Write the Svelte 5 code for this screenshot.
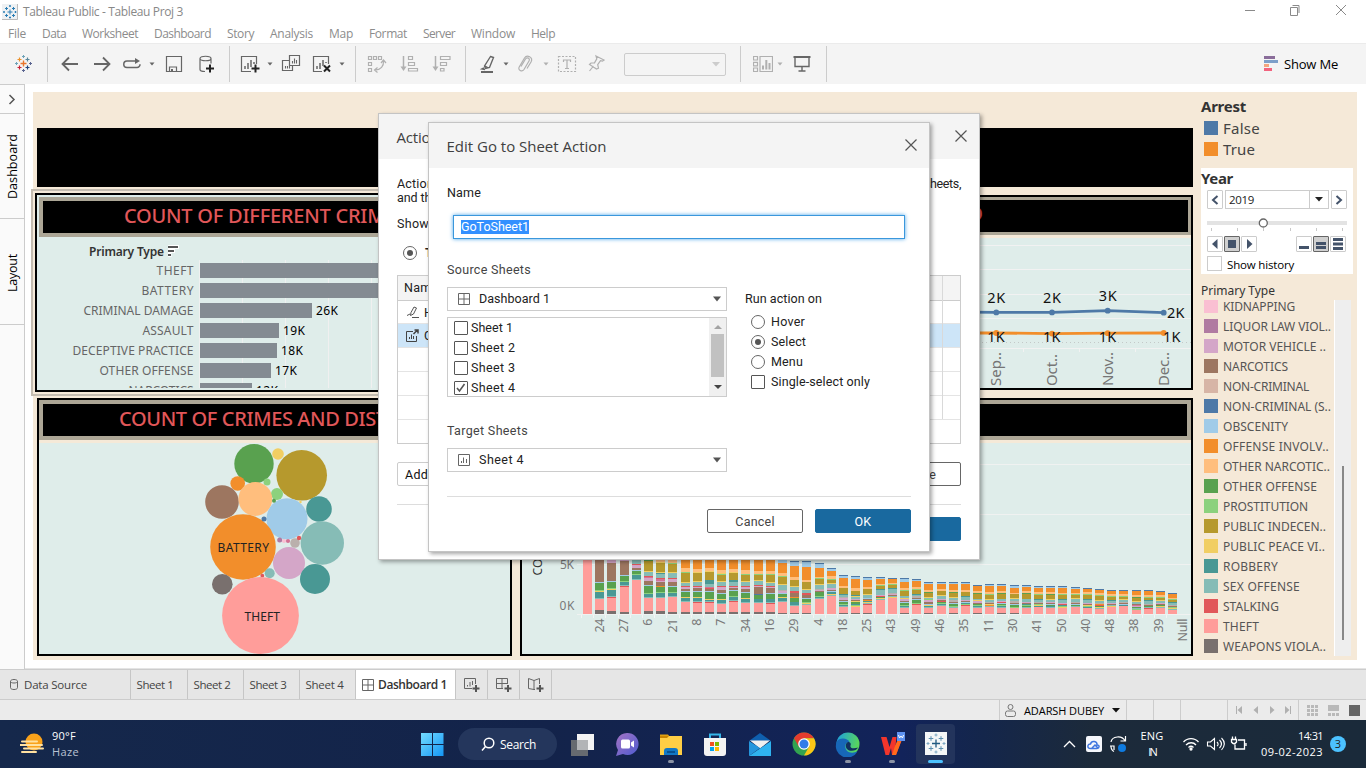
<script>
  // Tracks a label out (or in) so that it fills its design width.
  function fit(node, width) {
    const box = node.getBoundingClientRect();
    const natural = Math.max(box.width, box.height);
    node.style.letterSpacing = (width - natural) / node.textContent.length + 'px';
  }

  const menus = [
    ['File', 18], ['Data', 24], ['Worksheet', 56], ['Dashboard', 57], ['Story', 27], ['Analysis', 43],
    ['Map', 24], ['Format', 38], ['Server', 32], ['Window', 44], ['Help', 24]
  ];

  // [icon, gap before it]
  const toolGroups = [
    { w: 48, items: [['logo', 14]] },
    { w: 182, items: [['back', 12], ['forward', 12], ['loop', 10], ['caret', 5], ['save', 7], ['source', 12]] },
    { w: 126, items: [['addsheet', 10], ['caret', 5], ['duplicate', 6], ['clear', 11], ['caret', 5]] },
    { w: 110, faint: true, items: [['swap', 11], ['asc', 13], ['desc', 12]] }
  ];

  const rows = [
    ['THEFT', 37, 300, ''], ['BATTERY', 52, 260, ''], ['CRIMINAL DAMAGE', 110, 112, '26K'], ['ASSAULT', 51, 79, '19K'],
    ['DECEPTIVE PRACTICE', 121, 77, '18K'], ['OTHER OFFENSE', 94, 71, '17K'], ['NARCOTICS', 65, 52, '12K']
  ];

  const bubbles = [
    [254, 463.7, 19.7, '#59a14f'], [278, 454, 5.8, '#f1ce63'], [301.7, 475.3, 25.3, '#b6992d'],
    [237.7, 483.5, 7.3, '#f28e2b'], [267, 482, 3.5, '#8cd17d'], [277, 494, 6, '#8cd17d'],
    [222, 502, 16.8, '#9d7660'], [255.3, 499, 16.9, '#ffbe7d'], [287, 518.8, 20.5, '#a0cbe8'],
    [319, 509, 12.8, '#499894'], [322.3, 543, 21.7, '#86bcb6'], [243, 547, 32.8, '#f28e2b'],
    [264, 519, 2.5, '#4e79a7'], [274, 500.7, 2, '#59a14f'], [289, 563, 16, '#d4a6c8'],
    [315, 579, 15, '#499894'], [269.7, 573.3, 5, '#86bcb6'], [262.3, 575.7, 1.9, '#e15759'],
    [222.3, 584.3, 10.3, '#79706e'], [260.5, 615.5, 38.4, '#ff9d9a'], [279.7, 540, 2.5, '#b07aa1'],
    [284, 541, 2, '#fabfd2'], [288, 541, 2.1, '#d37295'], [295, 543, 4.8, '#bab0ac'], [299, 538, 2.2, '#e15759'],
    [300.5, 502, 1.2, '#f1ce63']
  ];

  const hue = {
    w: '#79706e', t: '#ff9d9a', s: '#e15759', x: '#86bcb6', r: '#499894', y: '#f1ce63', o: '#b6992d', p: '#8cd17d',
    g: '#59a14f', n: '#ffbe7d', f: '#f28e2b', b: '#a0cbe8', B: '#4e79a7', m: '#d4a6c8', c: '#9d7660', l: '#d37295', k: '#bab0ac'
  };
  // Each bar bottom-up: colour key followed by its height.
  const stacks = [
    't60', 'w4 t11 x1 r6 y1 p1 g7 b1 c28', 'w3 t13 s1 x1 r6 y1 p1 g6 b1 c18 m9', 'w2 t25 s1 x1 r3 p1 g5 b1 c14 m7',
    't34 x1 r4 p1 g3 b1 c2 m3 s1 x10', 'w3 t13 x1 r3 p1 g7 b1 c4 m3 l1 s1 x4 y1 o10 g1 n7',
    'w3 t13 x1 r4 p1 g5 f1 c4 m1 l2 s1 x4 r1 y1 o9 y1 n9', 'w2 t15 x1 r3 p1 g5 b1 c4 m3 s1 x5 y1 o8 p1 n9',
    'w2 t10 x1 r3 y1 g5 b1 c2 m2 s1 x3 y1 o9 p1 n4 f15', 'w2 t9 s1 x1 r3 y1 g5 b1 c3 m1 s1 x4 y1 o8 y1 n3 f15',
    'w2 t9 s1 x1 r1 y1 g7 b1 c2 s1 l1 x3 r4 o8 y1 n3 f15', 'w2 t8 x1 r3 y1 g5 b1 c3 m3 s1 x4 y1 o6 p1 y1 n3 f15',
    'w2 t10 s1 x1 r3 p1 g5 b1 c2 m1 s1 x4 r2 o7 y1 n3 f15', 'w2 t9 x1 r3 y1 g5 b1 c3 m2 s1 x4 y1 o6 p1 n4 f15',
    'w2 t9 x1 r3 g4 B1 c7 m1 s1 x4 y1 o5 p1 n3 f15', 'w2 t8 s1 x1 r3 g5 b1 c5 m1 s1 x3 y1 o7 p1 n3 f15',
    'w1 t11 x1 r3 y1 g3 b1 m2 k1 x5 y1 o7 p1 n3 f10 b6', 'w1 t7 x1 r3 g4 f1 c4 s2 x4 y1 o6 n3 f11 b4 B1',
    'w1 t8 x1 y1 p1 g3 b1 c3 s2 x3 y1 o7 n2 f13 b5 B1', 't15 x1 r1 p1 g4 c1 m1 k1 x4 y1 o5 p1 n1 f9 b4 B1',
    't18 x1 y1 r2 b1 c1 m2 x4 y1 o3 p1 n3 f5 b2 B1', 'w1 t6 x1 r1 p1 g2 b1 c1 m2 k1 x2 r1 o6 n2 f8 b2 B1',
    'w1 t6 y1 p1 r1 g2 y1 c1 m1 x2 y1 r1 o4 n3 f9 b2 B1', 'w1 t8 s1 x1 y1 r1 f1 c1 b1 x3 y1 o5 n2 f7 b2 B1',
    't14 x1 y1 g1 s1 m1 x5 r1 o3 p1 n1 f5 b1 B1', 't16 y1 x1 c1 m1 k1 x4 r1 o3 p1 n1 f4 B1',
    'w1 t5 x1 r1 p1 g2 b1 c1 m2 y1 x2 o5 p1 n2 f6 b3 B1', 't9 s1 p1 g3 b1 c1 k2 x1 r1 o4 p1 n2 f6 b1 B1',
    'w1 t5 x1 r1 y1 b1 c2 m2 p1 x1 y1 o4 g1 n2 f6 b1 B1', 't8 x1 r1 p1 g1 s1 c1 m1 x3 y1 o4 n2 f5 b1 B1',
    'w1 t5 x1 p1 g2 b1 c1 k2 x2 y1 o4 g1 n2 f6 b1 B1', 't8 s1 p1 r1 b1 c1 m1 x3 r1 o4 n2 f6 b1 B1',
    'w1 t5 x1 r1 p1 g1 c1 m2 y1 x1 o5 g1 n2 f5 B1', 't7 x1 f1 y1 c1 k1 x2 y1 o4 p1 n2 f6 b1 B1',
    'w1 t5 x1 r1 p1 g1 b1 s1 m1 x2 o5 g1 n2 f5 b1 B1', 'w1 t5 p1 g2 b1 c1 k2 x2 y1 o4 n1 f5 b2 B1',
    't6 x1 g1 p1 r1 c1 m1 x3 o5 g1 n2 f4 b1 B1', 't7 r1 y1 p1 c1 k1 x2 r1 o4 p1 n2 f4 b1 B1',
    't6 x1 r1 g1 b1 c1 m1 x2 y1 o4 g1 n2 f4 b1 B1', 't6 y1 p1 r1 s1 m1 x3 r1 o4 p1 n1 f5 b1 B1',
    't7 x1 g1 b1 c1 k1 x3 y1 o3 p1 n1 f4 b1 B1', 't6 r1 p1 y1 c1 m1 x3 r1 o4 p1 n2 f3 B1',
    't5 x1 y1 g1 s1 f1 k1 x2 y1 o4 p1 n2 f3 B1', 't7 y1 x1 c1 m1 x2 r1 o3 p1 n2 f3 B1',
    't8 r1 b1 c1 k1 x2 y1 o2 p1 n2 f3 B1', 't4 p1 x1 g1 m1 l1 c1 x2 y1 o3 g1 n2 f4 B1',
    't5 s1 x1 g1 c1 k1 x3 r1 o2 p1 n2 f4 B1', 't6 x1 y1 g1 c1 m1 x2 y1 o2 p1 n2 f3 B1',
    't4 x1 y1 p1 c1 k1 x2 r1 o2 p1 n1 f4 B1'
  ].map((text, i) => {
    let y = 614;
    return text.split(' ').map((part) => {
      const h = +part.slice(1);
      y -= h;
      return { x: Math.round(583 + i * 12.19), y, h, fill: hue[part[0]] };
    });
  });
  const wards = ['24', '27', '6', '21', '8', '7', '34', '16', '29', '4', '18', '25', '43', '49', '46', '35', '11', '30', '41', '50', '40', '48', '38', '39', 'Null'];

  const months = [['Sep..', 996.3, 312.4, 333, '2K'], ['Oct..', 1052, 312.4, 333.6, '2K'], ['Nov..', 1107.7, 310.7, 333.2, '3K'], ['Dec..', 1163.7, 312.7, 333, '']];

  const types = [
    ['KIDNAPPING', 72, '#fabfd2'], ['LIQUOR LAW VIOL..', 108, '#b07aa1'], ['MOTOR VEHICLE ..', 103, '#d4a6c8'],
    ['NARCOTICS', 65, '#9d7660'], ['NON-CRIMINAL', 86, '#d7b5a6'], ['NON-CRIMINAL (S..', 108, '#4e79a7'],
    ['OBSCENITY', 65, '#a0cbe8'], ['OFFENSE INVOLV..', 106, '#f28e2b'], ['OTHER NARCOTIC..', 107, '#ffbe7d'],
    ['OTHER OFFENSE', 94, '#59a14f'], ['PROSTITUTION', 85, '#8cd17d'], ['PUBLIC INDECEN..', 103, '#b6992d'],
    ['PUBLIC PEACE VI..', 102, '#f1ce63'], ['ROBBERY', 55, '#499894'], ['SEX OFFENSE', 77, '#86bcb6'],
    ['STALKING', 56, '#e15759'], ['THEFT', 36, '#ff9d9a'], ['WEAPONS VIOLA..', 103, '#79706e']
  ];

  const tabs = [['Sheet 1', 57, 37], ['Sheet 2', 56, 37], ['Sheet 3', 56, 37], ['Sheet 4', 56, 38]];
  const taskIcons = ['start', 'search', 'tasks', 'chat', 'files', 'store', 'mail', 'chrome', 'edge', 'wps', 'tableau'];
  const plus = (x, y, r) => `M${x - r} ${y}h${2 * r}M${x} ${y - r}v${2 * r}`;
  const tickX = (i) => Math.round(581 + i * 12.19) + 0.5;
</script>

{#snippet icon(name)}
  {#if name === 'caret'}
    <svg class="ic" width="10" height="20"><path d="M2.5 8.5h5L5 11.5z" fill="currentColor" /></svg>
  {:else}
    <svg class="ic" width="20" height="20" viewBox="0 0 20 20" fill="none" stroke="currentColor" stroke-width="1.2">
      {#if name === 'logo'}
        <path d={plus(9.5, 9.5, 3)} stroke="#e8762d" stroke-width="1.4" />
        <path d={plus(5.5, 5.5, 2)} stroke="#eb912b" /><path d={plus(13.5, 5.5, 2)} stroke="#59879b" />
        <path d={plus(5.5, 13.5, 2)} stroke="#c72035" /><path d={plus(13.5, 13.5, 2)} stroke="#1f457e" />
        <path d={plus(9.5, 2.5, 1.5) + plus(2.5, 9.5, 1.5)} stroke="#6fa3b8" stroke-width="1" />
        <path d={plus(9.5, 16.5, 1.5) + plus(16.5, 9.5, 1.5)} stroke="#5b6591" stroke-width="1" />
      {:else if name === 'back'}
        <path d="M18 10H3M9 3.5 2.5 10 9 16.5" stroke-width="1.8" />
      {:else if name === 'forward'}
        <path d="M2 10h15M11 3.5 17.500 10 11 16.500" stroke-width="1.8" />
      {:else if name === 'loop'}
        <path d="M14 7H5a3 3 0 0 0 0 6.500h10a3 3 0 0 0 3-3.200" stroke-width="1.500" /><path d="M13 4l5 3-5 3z" fill="currentColor" stroke="none" />
      {:else if name === 'save'}
        <path d="M2.500 2.500h15v15h-15zM5.500 17.500v-4.500h7v4.500" /><path d="M7 15h2v2.500H7z" fill="currentColor" stroke="none" />
      {:else if name === 'source'}
        <path d="M9 17.500c-3 0-5-.8-5-2V4.500c0-3 11-3 11 0v5M4 4.500c0 3 11 3 11 0" /><path d={plus(14, 14.500, 4)} stroke="#222" stroke-width="2" />
      {:else if name === 'addsheet'}
        <path d="M11 17.500H1.500v-15h15V10" /><path d="M5 15v-3M8 15V9M11 13V6M14 10V8" stroke-width="1.500" /><path d={plus(15.500, 14.500, 4)} stroke="#222" stroke-width="2" />
      {:else if name === 'duplicate'}
        <path d="M8.500 1.500h10v10h-10zM8 6.500H1.500v10h10V12" /><path d="M11.500 9.500V7M13.500 9.500V4.500M15.500 9.500V6M4.500 14.500V12M6.500 14.500V12M8.500 14.500V12" stroke-width="1.100" />
      {:else if name === 'clear'}
        <path d="M10 17.500H1.500v-15h15V10" /><path d="M5 15v-3M8 15V9M11 12V6M14 9V8" stroke-width="1.500" /><path d="M12 11.500l6 6M18 11.500l-6 6" stroke="#222" stroke-width="2" />
      {:else if name === 'swap'}
        <path d="M1.500 2.500h3v3h-3zM6.500 2.500h3v3h-3zM11.500 2.500h3v3h-3zM1.500 8.500h3v3h-3zM1.500 14.500h3v3h-3z" /><path d="M16.500 7c.5 5-3 9-8 9M14 9l2.500-3 2.500 3M10.500 13.500 7.500 16l3 2.500" />
      {:else if name === 'asc'}
        <path d="M3.500 2v13" stroke-width="1.500" /><path d="M0.500 12.500h6L3.500 17z" fill="currentColor" stroke="none" /><path d="M8.500 2.500h4v3h-4zM8.500 8.500h6v3h-6zM8.500 14.500h9v2.500h-9z" />
      {:else if name === 'desc'}
        <path d="M3.500 2v13" stroke-width="1.500" /><path d="M0.500 12.500h6L3.500 17z" fill="currentColor" stroke="none" /><path d="M8.500 2.500h9.500v3H8.500zM8.500 8.500h6v3h-6zM8.500 14.500h3.500v2.500H8.500z" />
      {:else if name === 'pen'}
        <path d="M11.500 2.500l3 1-4 10-4 1-1-2.500zM6 12l3 1.800M5 14l-2 1 3 .5" stroke-width="1.400" /><path d="M2 18h12" stroke-width="2" />
      {:else if name === 'clip'}
        <path d="M5 12.500 9.500 5c1.500-2.500 5-.5 3.500 2l-5 8.500c-2 3-6.500.5-4.800-2.500L8.500 4c2.500-4 9-.5 6.500 4l-4 6.500" />
      {:else if name === 'text'}
        <path d="M1.500 2.500h17v15h-17z" stroke-dasharray="2 1.500" /><path d="M6.500 8V6h7v2M10 6v8.500M8 14.500h4" />
      {:else if name === 'pin'}
        <path d="M9 2l8 4-1.500 1-2-.3-2.800 4 .8 3.500-2 .8-7-4.500 1.500-1.500 3.500-.2 2.300-4zM6.500 12l-4 5" />
      {:else if name === 'cards'}
        <path d="M.5 2.500h4v3.500h-4zM.5 8.300h4v3.500h-4zM.5 14h4v3.500h-4zM7 2.500h12.500v15H7z" /><path d="M10 15.500v-4M13.300 15.500V6M16.500 15.500V9" stroke-width="2" />
      {:else if name === 'present'}
        <path d="M1.500 3h17" stroke-width="2" /><path d="M3 4v8.500h14V4M10 12.500V17M6.500 17h7" stroke-width="1.400" />
      {/if}
    </svg>
  {/if}
{/snippet}

{#snippet grid4()}
  <svg width="12" height="12" fill="none" stroke="#666"><path d="M.5.5h11v11H.5zM6 .5v11M.5 6h11" /></svg>
{/snippet}
{#snippet down()}
  <svg width="8" height="6"><path d="M0 .5h8L4 5.500z" fill="#555" /></svg>
{/snippet}

<div class="screen">
  <header class="titlebar">
    <svg width="16" height="16" class="applogo"><rect width="16" height="16" fill="#eef1f3" /><path d="M0 15.500h15.500V0" stroke="#bbb" fill="none" /><path d={plus(8, 8, 2.5) + plus(4.500, 4.500, 1.500) + plus(11.500, 4.500, 1.500) + plus(4.500, 11.500, 1.500) + plus(11.500, 11.500, 1.500) + plus(8, 2, 1) + plus(8, 13.500, 1) + plus(2, 8, 1) + plus(13.500, 8, 1)} stroke="#2b7eb5" /></svg>
    <span use:fit={160}>Tableau Public - Tableau Proj 3</span>
    <svg class="winbtns" width="104" height="12" fill="none" stroke="#8a8a8a"><path d="M1 6.500h10" /><path d="M46.500 3.500h7v8h-7zM48.500 1.500h6.500v7.500" /><path d="M92 1l10 10M102 1 92 11" /></svg>
  </header>

  <nav class="menubar">
    {#each menus as [label, w]}
      <div class="menu" style:width="{w}px"><span use:fit={w}>{label}</span></div>
    {/each}
  </nav>

  <div class="toolbar">
    {#each toolGroups as g}
      <div class="tools" class:faint={g.faint} style:width="{g.w}px">
        {#each g.items as [name, gap]}
          <span class="tool" style:margin-left="{gap}px">{@render icon(name)}</span>
        {/each}
      </div>
    {/each}
    <div class="tools marks">
      <span class="tool">{@render icon('pen')}</span>
      <span class="tool c1">{@render icon('caret')}</span>
      <span class="faint fgrp">
        {@render icon('clip')}{@render icon('caret')}{@render icon('text')}{@render icon('pin')}
      </span>
      <div class="combo"><svg width="8" height="5"><path d="M0 0h8L4 4.500z" fill="#ccc" /></svg></div>
    </div>
    <div class="tools view">
      <span class="faint vgrp">{@render icon('cards')}{@render icon('caret')}</span>
      {@render icon('present')}
    </div>
    <div class="showme">
      <svg width="14" height="16"><path d="M0 0h11v3H0z" fill="#8a6d9a" /><path d="M0 4h14v3H0z" fill="#7d9fc9" /><path d="M0 8h5v3H0z" fill="#f2a57f" /><path d="M0 12h8v3H0z" fill="#f2637e" /></svg>
      <span use:fit={54}>Show Me</span>
    </div>
  </div>

  <main>
    <aside class="rail">
      <div class="chev"><svg width="8" height="11" fill="none" stroke="#555" stroke-width="1.500"><path d="M1.500 1l4.500 4.500-4.500 4.500" /></svg></div>
      <div class="side"><span use:fit={65}>Dashboard</span></div>
      <div class="side lay"><span use:fit={38}>Layout</span></div>
    </aside>

    <section class="canvas">
      <div class="dash">
        <div class="board">
          <div class="banner"></div>
          <div class="row one">
            <div class="chosen">
              <article class="panel">
                <h2 class="t1"><span use:fit={283}>COUNT OF DIFFERENT CRIMES</span></h2>
                <svg class="bars" viewBox="37 237 473 153" width="473" height="153">
                  <text x="89" y="255.500" class="head" textLength="75">Primary Type</text>
                  <path d="M168 247h11M168 251h7M168 255h3.500" stroke="#fff" stroke-width="4" />
                  <path d="M168 247h10M168 251h6M168 255h3" stroke="#555" stroke-width="2" />
                  <path d="M199.500 260v128M242.500 260v128M285.500 260v128M328.500 260v128M371.500 260v128" stroke="#f0f0f0" />
                  <svg x="37" y="237" width="473" height="151" viewBox="37 237 473 151">
                    {#each rows as [name, w, len, label], i}
                      <text x={193.500 - w} y={275 + i * 20} class="cat" textLength={w}>{name}</text>
                      <rect x="200" y={263 + i * 20} width={len} height="15" fill="#848b92" />
                      {#if label}<text x={204 + len} y={275 + i * 20} class="val" textLength="22">{label}</text>{/if}
                    {/each}
                  </svg>
                </svg>
              </article>
            </div>
            <article class="panel lines">
              <h2 class="t3">D</h2>
              <svg class="fill" viewBox="522 238 669 150" width="669" height="150">
                <path d="M522 245.500h669M522 269.500h669M522 294.500h669M522 318.500h669M522 348.500h669M1023.500 348v4M1079.500 348v4M1135.500 348v4" stroke="#f2f2f2" />
                <path d="M522 342.500h669" stroke="#c4c9c8" stroke-dasharray="1 3" />
                <path d="M900 311.500L996.300 312.400 1052 312.400 1107.700 310.700 1163.700 312.700" fill="none" stroke="#4e79a7" stroke-width="2.800" />
                <path d="M900 333L996.300 333 1052 333.600 1107.700 333.200 1163.700 333" fill="none" stroke="#f28e2b" stroke-width="2.800" />
                {#each months as [name, x, a, b, label]}
                  <circle cx={x} cy={a} r="2.900" fill="#4e79a7" /><circle cx={x} cy={b} r="2.900" fill="#f28e2b" />
                  {#if label}<text x={x - 9} y={a - 9.800} class="pt" textLength="18">{label}</text>{/if}
                  <text class="pt" textLength="17.500" x={label ? x - 9 : 1163} y={341.500}>1K</text>
                  <text class="mon" textLength={name === 'Oct..' ? 32 : 34} transform="translate({x + 5} 386) rotate(-90)">{name}</text>
                {/each}
                <text x="1167" y="317.500" class="pt" textLength="17.500">2K</text>
              </svg>
            </article>
          </div>
          <div class="row two">
            <article class="panel left">
              <h2 class="t2"><span use:fit={310}>COUNT OF CRIMES AND DISTRICT</span></h2>
              <svg class="fill" viewBox="39 443 471 211" width="471" height="211">
                {#each bubbles as [x, y, r, c]}<circle cx={x} cy={y} {r} fill={c} />{/each}
                <text x="217.500" y="552" class="bub" textLength="51.500">BATTERY</text>
                <text x="244.500" y="621" class="bub" textLength="35.500">THEFT</text>
              </svg>
            </article>
            <article class="panel right">
              <h2></h2>
              <svg class="fill" viewBox="522 443 669 211" width="669" height="211">
                <path d="M577 464.500h614M577 514.500h614M577 564.500h614M577 614.500h614" stroke="#f0f2f1" />
                {#each stacks as bar, i}
                  {#each bar as s}<rect x={s.x} y={s.y} width="9" height={s.h} fill={s.fill} />{/each}
                  <path d="M{tickX(i)} 615v3" stroke="#f4f4f4" />
                {/each}
                {#each wards as w, i}
                  <text class="ward" text-anchor="end" transform="translate({603.800 + i * 24.300} 618.500) rotate(-90)" textLength={w.length === 1 ? 7 : w.length === 2 ? 14 : 23}>{w}</text>
                {/each}
                <text x="560" y="569" class="ax" textLength="14">5K</text>
                <text x="559.500" y="610" class="ax" textLength="15">0K</text>
                <text class="axt" transform="translate(542 575.500) rotate(-90)" textLength="17">CO</text>
              </svg>
            </article>
          </div>
        </div>

        <aside class="legend">
          <h3 class="arrest"><span use:fit={45}>Arrest</span></h3>
          <div class="big"><i class="blue"></i><span use:fit={37}>False</span></div>
          <div class="big"><i class="orange"></i><span use:fit={32}>True</span></div>
          <div class="year">
            <h3><span use:fit={32}>Year</span></h3>
            <div class="pick">
              <b class="btn"><svg width="8" height="10" fill="none" stroke="#44536a" stroke-width="2"><path d="M6.500 1 2 5l4.500 4" /></svg></b>
              <div class="yr"><span use:fit={25}>2019</span><em><svg width="8" height="5"><path d="M0 0h8L4 4.500z" fill="#222" /></svg></em></div>
              <b class="btn"><svg width="8" height="10" fill="none" stroke="#44536a" stroke-width="2"><path d="M1.500 1 6 5 1.500 9" /></svg></b>
            </div>
            <svg class="slider" width="140" height="14"><path d="M0 5h140" stroke="#e3e3e3" stroke-width="4" /><path d="M4.500 10v3M30.500 10v3M56.500 10v3M83.500 10v3M109.500 10v3M135.500 10v3" stroke="#c8c8c8" /><circle cx="56.300" cy="5" r="4" fill="#fff" stroke="#666" stroke-width="1.300" /></svg>
            <div class="play">
              <b class="btn"><svg width="10" height="10"><path d="M7.500 0v10L2 5z" fill="#44536a" /></svg></b>
              <b class="btn on"><svg width="10" height="10"><path d="M1 1h8v8H1z" fill="#44536a" /></svg></b>
              <b class="btn"><svg width="10" height="10"><path d="M3 0v10L8.500 5z" fill="#44536a" /></svg></b>
              <b class="btn gap"><svg width="10" height="10"><path d="M0 7h10v3H0z" fill="#44536a" /></svg></b>
              <b class="btn on"><svg width="10" height="10"><path d="M0 3h10v3H0zM0 7h10v3H0z" fill="#44536a" /></svg></b>
              <b class="btn"><svg width="10" height="12"><path d="M0 0h10v3H0zM0 4.500h10v3H0zM0 9h10v3H0z" fill="#44536a" /></svg></b>
            </div>
            <div class="hist"><i></i><span use:fit={67}>Show history</span></div>
          </div>
          <div class="ptype"><span use:fit={74}>Primary Type</span></div>
          <div class="scroller">
            <ul>
              {#each types as [name, w, c]}
                <li><i style:background={c}></i><span use:fit={w}>{name}</span></li>
              {/each}
            </ul>
            <div class="track"><div></div></div>
          </div>
        </aside>
      </div>
    </section>
  </main>

  <div class="tabs">
    <div class="tab ds"><svg width="8" height="11" fill="none" stroke="#666"><path d="M.5 2.300c0-2.400 7-2.400 7 0v6.400c0 2.400-7 2.400-7 0zM.5 2.500c0 2 7 2 7 0" /></svg><span use:fit={63}>Data Source</span></div>
    {#each tabs as [name, w, tw]}
      <div class="tab" style:width="{w}px"><span use:fit={tw}>{name}</span></div>
    {/each}
    <div class="tab active">{@render grid4()}<span use:fit={69}>Dashboard 1</span></div>
    <div class="tab new"><svg width="18" height="16" fill="none" stroke="#666"><path d="M9 11.500H1.500v-10h11V7M4.500 9.500V8M7 9.500V5M9.500 8V4" /><path d={plus(13, 11.500, 3.500)} stroke="#555" stroke-width="2" /></svg></div>
    <div class="tab new"><svg width="18" height="16" fill="none" stroke="#666"><path d="M8 11.500H1.500v-10h11V7M7 1.500v10M1.500 6.500h11" /><path d={plus(13, 11.500, 3.500)} stroke="#555" stroke-width="2" /></svg></div>
    <div class="tab new"><svg width="18" height="16" fill="none" stroke="#666"><path d="M8 12.500h-1l-5.500-1v-10L7 3.500v9M7 3.500l5.500-2V7" /><path d={plus(13, 11.500, 3.500)} stroke="#555" stroke-width="2" /></svg></div>
  </div>

  <div class="status">
    <div class="user"><svg width="11" height="13" fill="none" stroke="#777"><circle cx="5.500" cy="3" r="2.500" /><rect x=".5" y="7" width="10" height="5.500" rx="2" /></svg><span use:fit={80}>ADARSH DUBEY</span><svg width="8" height="5"><path d="M0 0h8L4 4.500z" fill="#111" /></svg></div>
    <div class="c27"></div><div class="c27"></div><div class="c47"></div>
    <div class="pager"><svg width="58" height="8" fill="#b0b0b0"><path d="M1 0h1v8H1zM7 0v8L2.500 4zM23 0v8L18.500 4zM35 0v8l4.500-4zM50 0v8l4.500-4zM55 0h1v8h-1z" /></svg></div>
    <div class="modes"><svg width="54" height="12" fill="#b9b9b9"><path d="M0 1h3v3H0zM4 1h3v3H4zM8 1h3v3H8zM0 5h3v3H0zM4 5h3v3H4zM8 5h3v3H8zM0 9h3v3H0zM4 9h3v3H4zM8 9h3v3H8zM21 1h11v6H21zM21 9h3v3h-3zM25 9h3v3h-3zM29 9h3v3h-3z" /><path d="M42 1h11v11H42z" fill="#666" /></svg></div>
  </div>

  <footer class="taskbar">
    <div class="weather">
      <svg width="26" height="24"><circle cx="14" cy="10" r="8.500" fill="#f9a21b" /><path d="M2 9.500h15M0 13h22M4 16.500h19M2 20h14" stroke="#ffe1a1" stroke-width="2" stroke-linecap="round" /></svg>
      <div><span use:fit={24}>90°F</span><span class="haze" use:fit={27}>Haze</span></div>
    </div>
    <div class="apps">
      {#each taskIcons as name}
        {#if name === 'search'}
          <div class="search"><svg width="14" height="15" fill="none" stroke="#fff" stroke-width="1.500"><circle cx="8" cy="6" r="4.800" /><path d="M4.500 9.500 1 13.500" /></svg><span use:fit={36}>Search</span></div>
        {:else}
          <div class="app {name}">
            <svg width="26" height="26" viewBox="0 0 26 26">
              {#if name === 'start'}
                <path d="M2 2h11v11H2zM14 2h10.500v11H14zM2 14h11v11H2zM14 14h10.500v11H14z" fill="url(#win)" />
              {:else if name === 'tasks'}
                <path d="M1 9h17v16H1z" fill="#666a70" /><path d="M7 3h17v16H7z" fill="#f3f3f4" /><path d="M7 9h11v10H7z" fill="#b2b4b7" />
              {:else if name === 'chat'}
                <path d="M13 2a11 11 0 1 1-4 21l-7 2 2-6A11 11 0 0 1 13 2z" fill="url(#chat)" /><rect x="7" y="8.500" width="9" height="9" rx="1.500" fill="#fff" /><path d="M17 11.500l3-2v7l-3-2z" fill="#fff" />
              {:else if name === 'files'}
                <path d="M2 3.500h8l2 2.500h-10z" fill="#e0a010" /><path d="M2 5h22v19H2z" fill="#ffce45" /><path d="M2 5h9L9 7H2z" fill="#c98500" /><path d="M6 24v-4q0-3 3-3h8q3 0 3 3v4z" fill="#1277c5" /><path d="M9 21h8" stroke="#08508f" stroke-width="2" />
              {:else if name === 'store'}
                <path d="M8 8V3.500h10V8" fill="none" stroke="#35b6ea" stroke-width="2" /><path d="M2 7h22v15q0 3-3 3H5q-3 0-3-3z" fill="#f3f3f3" /><path d="M8 11h4v4H8z" fill="#f25022" /><path d="M13 11h4v4h-4z" fill="#7fba00" /><path d="M8 16h4v4H8z" fill="#00a4ef" /><path d="M13 16h4v4h-4z" fill="#ffb900" />
              {:else if name === 'mail'}
                <path d="M2 10 13 2l11 8z" fill="#0f5fae" /><path d="M3 9.500h20l-10 8z" fill="#f0f0f0" /><path d="M2 10l11 7L2 25z" fill="#2596dd" /><path d="M24 10 2 25h22z" fill="#2fb3f0" />
              {:else if name === 'chrome'}
                <circle cx="13" cy="13" r="11.500" fill="#32a350" /><path d="M3 7.250A11.500 11.500 0 0 1 23 7.250H13L8 16z" fill="#e33b2e" /><path d="M23 7.250A11.500 11.500 0 0 1 13 24.500L18.500 15 13 7.250z" fill="#fbc516" /><circle cx="13" cy="13" r="5.800" fill="#fff" /><circle cx="13" cy="13" r="4.500" fill="#2f7ce8" />
              {:else if name === 'edge'}
                <circle cx="13" cy="13" r="11.500" fill="url(#edge)" /><path d="M1.600 11C4 6 13 7 14.500 11c-4 0-5.500 4-3.500 7.500 2 3.500 7 4 11.500 2A11.500 11.500 0 0 1 1.600 11z" fill="#1767b8" /><path d="M13 11c2 0 3.500 1.500 2.500 3.500-1 3 4 3.500 7.500 2-1 3-8 5-11 1.500-2-2.500-1.500-6 1-7z" fill="#12305f" />
              {:else if name === 'wps'}
                <path d="M2 6h5.500l3 10 3-10h4l-1 9 4-9h3L17 24h-4l-1-7-2 7H6.500z" fill="#f2352c" /><path d="M13 24l3-9 4-9h4L17 24z" fill="#ff6a1c" /><path d="M18 1h8v9h-8z" fill="#5e93f2" /><path d="M19.500 4l1 3 1.500-2 1.500 2 1-3" stroke="#fff" fill="none" />
              {:else}
                <path d="M2 2h22v23H2z" fill="#f5f7f8" /><path d={plus(13, 13.500, 4)} stroke="#215a80" stroke-width="1.300" /><path d={plus(8, 8.500, 2.300) + plus(18, 8.500, 2.300) + plus(8, 18.500, 2.300) + plus(18, 18.500, 2.300)} stroke="#5a8fb0" /><path d={plus(13, 5, 1.500) + plus(13, 22, 1.500) + plus(5, 13.500, 1.500) + plus(21, 13.500, 1.500)} stroke="#7fa9c4" />
              {/if}
            </svg>
            {#if ['files', 'edge', 'wps', 'tableau'].includes(name)}<i></i>{/if}
          </div>
        {/if}
      {/each}
    </div>
    <div class="tray">
      <svg width="68" height="20" fill="none" stroke="#fff" stroke-width="1.300"><path d="M1 13l5.500-5.500L12 13" /><rect x="23" y="2" width="16" height="16" rx="2" fill="#f5f7fb" stroke="none" /><path d="M27.500 14.500c-4 0-3-5 0-4.500 1-4 7-3 6.500 1 3 0 2.500 3.500 0 3.500zM29 14l3-3 3 3" stroke="#3f76df" stroke-width="1.500" /><path d="M48 8c1-6 11-7 14-1M62.500 2v5h-5M51 17.500c-2-1-3-3-3-5.500M47 12h4v4" stroke-width="1.200" /><circle cx="59" cy="14" r="4" fill="#0f7be0" stroke="none" /></svg>
      <div class="lang"><span use:fit={23}>ENG</span><span use:fit={12}>IN</span></div>
      <svg width="66" height="18" fill="none" stroke="#fff" stroke-width="1.300"><path d="M1.500 7c4-4.500 11-4.500 15 0M4 10c3-3 7.500-3 10 0M6.500 12.500c1.500-1.500 3.500-1.500 5 0" /><circle cx="9" cy="14" r="1" fill="#fff" /><path d="M25.500 7h3l4-3.500v11L28.500 11h-3zM35 7c1.500 1.500 1.500 3 0 4M37.500 5c2.500 2.500 2.500 5.500 0 8M39.500 3c4 4 3.500 8 0 12" stroke-width="1.100" /><path d="M56 5h6.500v9H53v-4.500M64 8v3M50.500 1.500v3M53.500 1.500v3M49.500 4.500h5v2.500q-2.500 3.500-5 0z" /></svg>
      <div class="clock"><span use:fit={25}>14:31</span><span use:fit={62}>09-02-2023</span></div>
      <b class="badge">3</b>
    </div>
  </footer>
  <svg width="0" height="0" class="defs"><defs>
    <linearGradient id="win" x2="1" y2="1"><stop stop-color="#74dcff" /><stop offset="1" stop-color="#1496f5" /></linearGradient>
    <linearGradient id="chat" x2="1" y2="1"><stop stop-color="#a474c4" /><stop offset="1" stop-color="#4d5bd0" /></linearGradient>
    <linearGradient id="edge" x2="1" y2=".3"><stop stop-color="#1b9de2" /><stop offset="1" stop-color="#58d65c" /></linearGradient>
  </defs></svg>

  <div class="dialog actions">
    <div class="dhead"><span use:fit={50}>Actions</span><svg width="12" height="12" stroke="#555" stroke-width="1.200"><path d="M.5.5l11 11M11.500.5l-11 11" /></svg></div>
    <div class="dbody">
      <div class="intro"><p><span use:fit={37}>Action</span></p><p class="r"><span use:fit={37}>sheets,</span></p></div>
      <p class="and"><span use:fit={41}>and the</span></p>
      <p class="show">Show</p>
      <div class="this"><i class="radio on"></i><b>This</b></div>
      <div class="table">
        <div class="th"><span class="w">Name</span></div>
        <div class="tr"><svg width="14" height="12" fill="none" stroke="#555"><path d="M8 1l2.500 1-3 6-3 1.500.5-3zM1 9.500l3-1.500M6 11.500h7" /></svg><span>H</span></div>
        <div class="tr sel"><svg width="15" height="13" fill="none" stroke="#444"><path d="M8 2.500H1.500v10h10V7M4.500 10V8M6.500 10V5.500M8.500 10V7" /><path d="M8.500 5l4-4M9.500 1h3.500v3.500" stroke-width="1.500" /></svg><span>G</span></div>
        <div class="tr"></div><div class="tr"></div><div class="tr"></div><div class="tr last"></div>
        <div class="vline"></div>
      </div>
      <div class="adds"><div class="obtn add">Add</div><div class="obtn rem">Remove</div></div>
      <div class="rule"></div>
      <div class="okline"><div class="pbtn"></div></div>
    </div>
  </div>

  <div class="dialog edit">
    <div class="dhead"><span use:fit={160}>Edit Go to Sheet Action</span><svg width="12" height="12" stroke="#555" stroke-width="1.200"><path d="M.5.5l11 11M11.500.5l-11 11" /></svg></div>
    <div class="ebody">
      <label class="name"><span use:fit={34}>Name</span></label>
      <div class="input"><mark><span use:fit={68}>GoToSheet1</span></mark></div>
      <p class="src"><span use:fit={84}>Source Sheets</span></p>
      <div class="cols">
        <div class="lcol">
          <div class="select">{@render grid4()}<span use:fit={71}>Dashboard 1</span><em>{@render down()}</em></div>
          <div class="list">
            <ul>
              {#each [1, 2, 3, 4] as n}
                <li><i class="cb">{#if n === 4}<svg width="11" height="11" fill="none" stroke="#555" stroke-width="1.600"><path d="M2 6l2.500 3L9.500 2" /></svg>{/if}</i><span use:fit={n === 1 ? 42 : 44.500}>Sheet {n}</span></li>
              {/each}
            </ul>
            <div class="lbar"><svg width="8" height="4"><path d="M0 4h8L4 0z" fill="#a3a3a3" /></svg><div></div><svg width="8" height="4"><path d="M0 0h8L4 4z" fill="#444" /></svg></div>
          </div>
        </div>
        <div class="rcol">
          <p><span use:fit={77}>Run action on</span></p>
          <div class="opt"><i class="radio"></i><span use:fit={34}>Hover</span></div>
          <div class="opt"><i class="radio on"></i><span use:fit={35}>Select</span></div>
          <div class="opt"><i class="radio"></i><span use:fit={32}>Menu</span></div>
          <div class="opt"><i class="cb"></i><span use:fit={99}>Single-select only</span></div>
        </div>
      </div>
      <p class="tgt"><span use:fit={81}>Target Sheets</span></p>
      <div class="select"><svg width="12" height="12" fill="none" stroke="#666"><path d="M.5.5h11v11H.5zM3.500 9V7M5.500 9V3.500M8.500 9V5" /></svg><span use:fit={45}>Sheet 4</span><em>{@render down()}</em></div>
      <div class="rule"></div>
      <div class="btns"><div class="obtn"><span use:fit={39.500}>Cancel</span></div><div class="pbtn"><span use:fit={17}>OK</span></div></div>
    </div>
  </div>
</div>

<style>
  :global(body) { overflow: hidden; }
  .screen { position: relative; width: 1366px; height: 768px; display: flex; flex-direction: column; background: #fff; font: 12px "Open Sans", sans-serif; color: #222; overflow: hidden; }
  .screen * { box-sizing: border-box; }
  .screen span, .screen mark { white-space: nowrap; display: inline-block; }
  svg { display: block; flex: none; }
  p, h2, h3, ul { margin: 0; padding: 0; list-style: none; }
  i, em { font-style: normal; }
  .defs { position: absolute; }

  .titlebar { height: 23px; display: flex; align-items: center; padding: 0 18px 0 2px; gap: 5px; color: #888; }
  .winbtns { margin-left: auto; margin-top: -3px; }
  .menubar { height: 20px; display: flex; gap: 16px; padding-left: 8px; align-items: center; color: #8c8c8c; }
  .menu { flex: none; }
  .toolbar { height: 41px; background: #f4f4f4; border-top: 1px solid #ebebeb; display: flex; align-items: center; color: #666; }
  .tools { height: 36px; border-right: 1px solid #ccc; display: flex; align-items: center; flex: none; }
  .faint { color: #b0b0b0; }
  .marks { width: 275px; padding-left: 13px; }
  .c1 { margin-left: 2px; }
  .fgrp, .vgrp { display: flex !important; }
  .fgrp { margin-left: 5px; }
  .fgrp :global(svg:nth-child(2)) { margin-left: 5px; }
  .fgrp :global(svg:nth-child(3)) { margin-left: 6px; }
  .fgrp :global(svg:nth-child(4)) { margin-left: 10px; }
  .combo { width: 102px; height: 23px; border: 1px solid #ccc; border-radius: 2px; margin-left: 17px; display: flex; align-items: center; justify-content: flex-end; padding-right: 5px; }
  .view { width: 86px; padding-left: 12px; gap: 7px; }
  .vgrp { gap: 2px; }
  .showme { margin-left: auto; margin-right: 28px; display: flex; align-items: center; gap: 6px; font-size: 13px; color: #000; }

  main { flex: none; height: 585px; display: flex; }
  .rail { width: 25px; background: #fafafa; border-right: 1px solid #ccc; border-top: 1px solid #ccc; }
  .rail > div { border-bottom: 1px solid #ccc; display: flex; align-items: center; justify-content: center; }
  .chev { height: 29px; }
  .side { height: 105px; font-size: 12.500px; color: #000; }
  .side.lay { height: 106px; padding-top: 2px; }
  .side span { writing-mode: vertical-rl; transform: rotate(180deg); }
  .canvas { flex: 1; padding: 8px 9px 9px 8px; border-bottom: 1px solid #e4e4e4; }
  .dash { height: 568px; background: #f5e9d8; display: flex; }
  .board { width: 1160px; flex: none; }
  .banner { height: 59px; margin: 36px 0 0 4px; background: #000; }
  .row { display: flex; }
  .one { height: 207px; margin-top: 2px; align-items: flex-start; }
  .chosen { margin-left: -2px; border: 2px solid #c4bcb0; padding: 2px; width: 483px; height: 207px; flex: none; }
  .panel { background: #dfedea; border: 2px solid #000; height: 258px; }
  .chosen .panel { height: 199px; padding: 2px 0 0; }
  .panel h2 { height: 40px; border: 4px solid #aca696; background: #000; color: #e15759; font: 500 20px/29px "Noto Sans", sans-serif; }
  .chosen h2 { margin-left: 2px; }
  .t1 { padding-left: 81px; }
  .panel .t2 { padding-left: 76px; }
  .lines { margin: 6px 0 0 6px; flex: 1; height: 195px !important; }
  .panel .t3 { height: 38px; border-width: 3px; padding-left: 444px; font-size: 19px; line-height: 29px; }
  .panel:not(.chosen .panel) h2 { margin-bottom: 3px; box-shadow: 0 3px 0 #f5e9d8; }
  .two { margin-top: 2px; padding-left: 4px; gap: 8px; }
  .left { width: 475px; }
  .right { width: 673px; }
  svg text { font-family: "Noto Sans", sans-serif; }
  .head { font-size: 12px; font-weight: 600; fill: #333; }
  .cat { font-size: 12px; fill: #666; }
  .val { font-size: 12px; fill: #000; }
  .bub { font-size: 12px; fill: #222; }
  .pt { font-size: 14.500px; fill: #111; }
  .mon { font-size: 15px; fill: #757575; }
  .ward { font-size: 12.500px; fill: #787878; }
  .ax { font-size: 12px; fill: #787878; }
  .axt { font-size: 12px; fill: #333; }

  .legend { margin-left: 8px; width: 152px; font-family: "Noto Sans", sans-serif; }
  .legend h3 { font-size: 15px; line-height: 20px; font-weight: 700; color: #333; }
  .arrest { margin-top: 4px; }
  .big { display: flex; height: 21px; align-items: center; gap: 5px; padding-left: 3px; font-size: 15px; color: #444; }
  .arrest + .big { margin-top: 1px; }
  .big i { width: 14px; height: 14px; }
  .blue { background: #4e79a7; }
  .orange { background: #f28e2b; }
  .year { background: #fff; height: 106px; margin-top: 9px; font-family: "Open Sans", sans-serif; }
  .year h3 { font-family: "Noto Sans", sans-serif; }
  .pick, .play { display: flex; gap: 2px; padding-left: 6px; }
  .pick { margin-top: 2px; }
  .btn { width: 15px; height: 16px; border: 1px solid #ccc; border-radius: 1px; display: flex; align-items: center; justify-content: center; }
  .play .btn { width: 15.500px; }
  .pick .btn { width: 16px; height: 19px; }
  .yr { width: 104px; height: 19px; border: 1px solid #ccc; display: flex; align-items: center; padding-left: 3px; font-size: 11.500px; color: #222; }
  .yr em { margin-left: auto; width: 19px; height: 17px; border-left: 1px solid #ccc; display: flex; align-items: center; justify-content: center; }
  .slider { margin: 9px 0 0 6px; }
  .play { margin-top: 4px; gap: 1.500px; }
  .on.btn { background: #d0d0d0; border-color: #666; }
  .btn.gap { margin-left: 38px; }
  .hist { display: flex; align-items: center; padding: 3px 0 0 6px; gap: 5px; color: #000; height: 20px; font-size: 11.500px; }
  .hist i { width: 15px; height: 15px; border: 1px solid #ccc; background: #fff; }
  .hist span { padding-top: 2px; }
  .ptype { height: 18px; margin-top: 8px; line-height: 17px; font-size: 12px; color: #333; }
  .scroller { height: 356px; display: flex; justify-content: space-between; overflow: hidden; }
  .scroller ul { margin-top: -4px; }
  .scroller li { height: 20px; display: flex; align-items: center; gap: 5px; padding-left: 3px; font-size: 12px; color: #555; }
  .scroller li i { width: 14px; height: 14px; }
  .track { width: 17px; margin-right: 2px; background: #eee; border-left: 1px solid #fff; }
  .track div { width: 2px; height: 174px; margin: 166px 0 0 7px; background: #888; }

  .tabs { height: 31px; flex: none; background: #e6e6e6; border-top: 1px solid #ccc; border-bottom: 1px solid #ccc; display: flex; font-size: 11.500px; color: #444; }
  .tab { border-right: 1px solid #c6c6c6; display: flex; align-items: center; padding-left: 5.500px; flex: none; }
  .tab.ds { width: 131px; padding-left: 10px; gap: 6px; }
  .tab.active { background: #fff; width: 100px; gap: 4px; font-weight: 600; color: #333; padding-left: 6px; font-size: 12px; }
  .tab.new { width: 32px; padding-left: 7px; }
  .status { height: 20px; flex: none; background: #ebebeb; display: flex; justify-content: flex-end; }
  .status > div { border-left: 1px solid #ccc; display: flex; align-items: center; }
  .user { width: 127px; padding-left: 5px; gap: 8px; color: #000; font-size: 11px; }
  .c27 { width: 27px; }
  .c47 { width: 47px; }
  .pager { width: 71px; padding-left: 7px; }
  .modes { width: 68px; padding-left: 8px; }

  .taskbar { height: 48px; flex: none; background: linear-gradient(90deg, #15284b, #13234a 40%, #12235a 66%, #14264b 72%, #1c2a3a 80%, #1a2a3a); display: flex; align-items: center; color: #fff; }
  .weather { display: flex; padding-left: 20px; gap: 6px; width: 419px; align-items: center; font-size: 11px; line-height: 16px; }
  .weather div { display: flex; flex-direction: column; align-items: flex-start; }
  .haze { color: #b9c2d2; }
  .apps { display: flex; align-items: center; }
  .app { width: 44.150px; height: 48px; padding: 11px 9px 0; position: relative; }
  .app.start { width: 39px; padding-left: 0; padding-right: 0; }
  .app i { position: absolute; left: 19px; bottom: 5px; width: 6px; height: 3px; border-radius: 2px; background: #8b93a5; }
  .app.tableau { height: 40px; width: 39px; padding: 6px 6.500px 0; background: #23345c; border-radius: 4px; margin-left: 2px; }
  .app.tableau i { left: 12px; bottom: 1px; width: 15px; background: #4cc2ff; }
  .search { width: 99px; height: 32px; border-radius: 16px; background: #24365c; display: flex; align-items: center; gap: 5px; padding-left: 23px; font-size: 12px; margin-right: 4px; }
  .tray { margin-left: auto; display: flex; align-items: center; padding-right: 20px; font-size: 11px; line-height: 16px; }
  .tray > svg { margin-right: 9px; }
  .lang { display: flex; flex-direction: column; align-items: center; margin-right: 18px; width: 24px; }
  .clock { display: flex; flex-direction: column; align-items: flex-end; margin-right: 7px; width: 66px; }
  .badge { width: 16px; height: 16px; border-radius: 8px; background: #4cc2ff; color: #222; font-weight: 400; text-align: center; font-size: 11px; }

  .dialog { position: absolute; background: #fff; border: 1px solid #c4c4c4; box-shadow: 2px 2px 4px rgba(0, 0, 0, .35); font: 12.500px Roboto, sans-serif; color: #222; }
  .actions { left: 378px; top: 113px; width: 602px; height: 447px; }
  .edit { left: 428px; top: 122px; width: 502px; height: 430px; }
  .dhead { height: 45px; background: #f4f4f4; display: flex; justify-content: space-between; align-items: center; padding: 1px 12px 0 17.500px; font: 15px "Open Sans", sans-serif; color: #404040; }
  .dhead svg { margin-top: -2px; }
  .dbody { padding: 18px 18px 0; }
  .intro { display: flex; justify-content: space-between; line-height: 14px; }
  .and { line-height: 14px; }
  .show { margin-top: 11px; line-height: 15px; letter-spacing: .3px; }
  .this { display: flex; gap: 8px; padding: 14px 0 0 6px; align-items: center; }
  .radio { width: 14px; height: 14px; border: 1px solid #666; border-radius: 50%; flex: none; display: flex; align-items: center; justify-content: center; }
  .radio.on::after { content: ""; width: 6px; height: 6px; border-radius: 50%; background: #555; }
  .table { position: relative; margin-top: 15px; border: 1px solid #ccc; height: 169px; }
  .th { height: 25px; background: #f4f4f4; border-bottom: 1px solid #ccc; line-height: 24px; padding-left: 6px; letter-spacing: .3px; }
  .tr { height: 24px; border-bottom: 1px solid #e4e4e4; display: flex; align-items: center; padding-left: 8px; gap: 4px; }
  .tr:nth-child(2) { height: 23px; }
  .tr.sel { background: #cde5f8; height: 24px; padding-left: 7px; }
  .last { border: 0; }
  .vline { position: absolute; right: 17px; top: 0; height: 143px; width: 1px; background: #d9d9d9; }
  .adds { display: flex; justify-content: space-between; margin-top: 18px; }
  .obtn, .pbtn { width: 96px; height: 24px; border: 1px solid #666; border-radius: 2px; display: flex; align-items: center; justify-content: center; color: #444; }
  .obtn.add { justify-content: flex-start; padding-left: 7px; border-color: #ccc; color: #111; letter-spacing: .3px; }
  .obtn.rem { width: 96px; justify-content: flex-end; padding-right: 24px; }
  .pbtn { background: #19699f; border-color: #19699f; color: #fff; }
  .rule { height: 1px; background: #ddd; margin-top: 18px; }
  .okline { display: flex; justify-content: flex-end; margin-top: 12px; }
  .ebody { padding: 17px 18px 0; }
  .name { display: block; line-height: 16px; }
  .input { margin: 14px 6px 0 6px; height: 24px; border: 1px solid #3a97dc; box-shadow: 0 0 4px #4aa5e8; display: flex; align-items: center; padding-left: 7px; }
  .input mark { background: #3390ff; color: #fff; height: 14px; line-height: 14px; }
  .src { margin-top: 23px; line-height: 16px; color: #444; }
  .cols { display: flex; gap: 18px; margin-top: 9px; }
  .lcol { width: 280px; }
  .select { width: 280px; height: 24px; border: 1px solid #ccc; display: flex; align-items: center; padding: 0 5px 0 10px; gap: 9px; }
  .select span, .list li span, .opt span { margin-top: -1px; }
  .select em { margin-left: auto; }
  .list { margin-top: 6px; height: 80px; border: 1px solid #ccc; display: flex; justify-content: space-between; overflow: hidden; }
  .list li { height: 20px; display: flex; align-items: center; gap: 3px; padding-left: 6px; }
  .cb { width: 14px; height: 14px; border: 1px solid #555; border-radius: 1px; flex: none; display: block; }
  .lbar { width: 17px; background: #f0f0f0; display: flex; flex-direction: column; align-items: center; padding: 7px 0 7px; justify-content: space-between; }
  .lbar div { width: 13px; height: 43px; background: #c1c1c1; margin-bottom: 4px; }
  .rcol p { line-height: 24px; }
  .opt { height: 20px; display: flex; align-items: center; gap: 6px; padding-left: 6px; }
  .opt:nth-child(2) { margin-top: 1px; }
  .tgt { margin: 26px 0 9px; line-height: 16px; color: #444; }
  .ebody .rule { margin-top: 24px; }
  .btns { display: flex; justify-content: flex-end; gap: 12px; margin-top: 12px; }
</style>
